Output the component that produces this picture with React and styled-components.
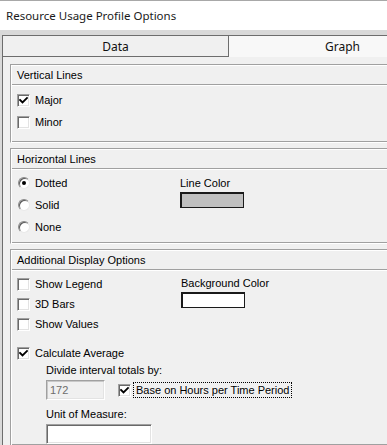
import React from 'react';
import styled, { createGlobalStyle } from 'styled-components';

const GlobalStyle = createGlobalStyle`
  html, body {
    margin: 0;
    padding: 0;
    overflow: hidden;
    background: #ffffff;
  }
`;

const Window = styled.div`
  width: 470px;
  height: 445px;
  border-top: 1px solid #a8a8a8;
  display: flex;
  flex-direction: column;
  font-family: 'Liberation Sans', Arial, sans-serif;
  font-size: 11px;
  color: #000;
`;

const TitleBar = styled.div`
  height: 30px;
  background: #ffffff;
  display: flex;
  align-items: center;
  padding-left: 6px;
  font-family: 'Noto Sans', 'Segoe UI', sans-serif;
  font-size: 11.5px;
  color: #1a1a1a;
`;

const Body = styled.div`
  flex: 1;
  background: #d9d9d9;
  padding: 5px 0 0 2px;
  display: flex;
  flex-direction: column;
`;

const TabBar = styled.div`
  display: flex;
  height: 22px;
`;

const Tab = styled.div`
  width: 227px;
  box-sizing: border-box;
  display: flex;
  align-items: center;
  justify-content: center;
  font-family: 'Noto Sans', 'Segoe UI', sans-serif;
  font-size: 12px;
  color: #111;
  border-top: 1px solid #6d6d6d;
  border-left: ${(p) => (p.$first ? '1px solid #6d6d6d' : 'none')};
  border-right: ${(p) => (p.$active ? 'none' : '1px solid #6d6d6d')};
  border-bottom: ${(p) => (p.$active ? 'none' : '1px solid #6d6d6d')};
  background: ${(p) => (p.$active ? '#f8f8f8' : '#f0f0f0')};
`;

const Panel = styled.div`
  flex: 1;
  background: #f0f0f0;
  border-left: 1px solid #6d6d6d;
  padding: 7px 0 0 7px;
  display: flex;
  flex-direction: column;
  gap: 5px;
`;

const Section = styled.div`
  box-sizing: border-box;
  height: ${(p) => (p.$height ? `${p.$height}px` : 'auto')};
  flex: ${(p) => (p.$height ? 'none' : '1')};
  border-top: 1px solid #a0a0a0;
  border-left: 1px solid #a0a0a0;
  border-right: 1px solid #ffffff;
  border-bottom: 1px solid #ffffff;
  box-shadow: inset 1px 1px 0 #ffffff, inset -1px -1px 0 #a0a0a0;
  padding: 1px;
  display: flex;
  flex-direction: column;
`;

const SectionHeader = styled.div`
  height: 18px;
  display: flex;
  align-items: center;
  padding-left: 5px;
  border-bottom: 1px solid #a0a0a0;
  box-shadow: 0 1px 0 #ffffff;
`;

const SectionBody = styled.div`
  padding: ${(p) => p.$pad || '4px 0 0 5px'};
  display: flex;
  flex-direction: ${(p) => (p.$row ? 'row' : 'column')};
`;

const Column = styled.div`
  display: flex;
  flex-direction: column;
  width: ${(p) => (p.$width ? `${p.$width}px` : 'auto')};
`;

const OptionRow = styled.div`
  height: ${(p) => p.$h || 22}px;
  display: flex;
  align-items: center;
  gap: ${(p) => p.$gap || 5}px;
  margin-top: ${(p) => p.$mt || 0}px;
`;

const BoxFrame = styled.span`
  width: 13px;
  height: 13px;
  box-sizing: border-box;
  flex: none;
  background: #ffffff;
  border-top: 1px solid #a0a0a0;
  border-left: 1px solid #a0a0a0;
  border-right: 1px solid #ffffff;
  border-bottom: 1px solid #ffffff;
  box-shadow: inset 1px 1px 0 #696969, inset -1px -1px 0 #e3e3e3;
  display: flex;
  align-items: center;
  justify-content: center;
`;

const RadioCircle = styled.span`
  width: 12px;
  height: 12px;
  box-sizing: border-box;
  flex: none;
  border-radius: 50%;
  background: #ffffff;
  border: 1px solid;
  border-color: #8a8a8a #e8e8e8 #e8e8e8 #8a8a8a;
  box-shadow: inset 1px 1px 0 #5a5a5a;
  display: flex;
  align-items: center;
  justify-content: center;
  margin-left: 1px;
  &::after {
    content: '';
    width: 4px;
    height: 4px;
    border-radius: 50%;
    background: ${(p) => (p.$on ? '#000' : 'transparent')};
  }
`;

const Label = styled.span`
  white-space: nowrap;
  padding: 1px 2px;
  border: 1px ${(p) => (p.$focus ? 'dotted #000' : 'solid transparent')};
  margin-left: -3px;
`;

const FieldLabel = styled.div`
  height: 14px;
  line-height: 14px;
  margin-top: ${(p) => p.$mt || 0}px;
  white-space: nowrap;
`;

const Swatch = styled.div`
  width: 64px;
  height: 16px;
  box-sizing: border-box;
  margin-top: ${(p) => p.$mt || 0}px;
  background: ${(p) => p.$color};
  border: 1px solid #1a1a1a;
  border-top-width: 2px;
  border-left-width: 2px;
`;

const TextInput = styled.div`
  width: ${(p) => p.$width}px;
  height: 20px;
  box-sizing: border-box;
  flex: none;
  background: ${(p) => (p.$disabled ? '#f0f0f0' : '#ffffff')};
  color: #6d6d6d;
  border-top: 1px solid #a0a0a0;
  border-left: 1px solid #a0a0a0;
  border-right: 1px solid #ffffff;
  border-bottom: 1px solid #ffffff;
  box-shadow: ${(p) =>
    p.$disabled
      ? 'inset 1px 1px 0 #c8c8c8, inset -1px -1px 0 #e3e3e3'
      : 'inset 1px 1px 0 #696969, inset -1px -1px 0 #e3e3e3'};
  display: flex;
  align-items: center;
  padding-left: 3px;
`;

const SubBlock = styled.div`
  padding-left: 29px;
  display: flex;
  flex-direction: column;
`;

const InputRow = styled.div`
  display: flex;
  align-items: center;
  margin-top: 3px;
  gap: 13px;
`;

const CheckMark = () => (
  <svg width="9" height="9" viewBox="0 0 9 9">
    <polyline points="1,4 3.5,6.5 8,2" fill="none" stroke="#000" strokeWidth="1.9" strokeLinecap="square" />
  </svg>
);

const Checkbox = ({ checked, label, focus, h, mt }) => (
  <OptionRow $h={h} $mt={mt}>
    <BoxFrame>{checked && <CheckMark />}</BoxFrame>
    <Label $focus={focus}>{label}</Label>
  </OptionRow>
);

const Radio = ({ checked, label }) => (
  <OptionRow>
    <RadioCircle $on={checked} />
    <Label>{label}</Label>
  </OptionRow>
);

export default function App() {
  return (
    <>
      <GlobalStyle />
      <Window>
        <TitleBar>Resource Usage Profile Options</TitleBar>
        <Body>
          <TabBar>
            <Tab $first>Data</Tab>
            <Tab $active>Graph</Tab>
          </TabBar>
          <Panel>
            <Section $height={79}>
              <SectionHeader>Vertical Lines</SectionHeader>
              <SectionBody>
                <Checkbox checked label="Major" />
                <Checkbox label="Minor" />
              </SectionBody>
            </Section>

            <Section $height={96}>
              <SectionHeader>Horizontal Lines</SectionHeader>
              <SectionBody $row $pad="3px 0 0 5px">
                <Column $width={163}>
                  <Radio checked label="Dotted" />
                  <Radio label="Solid" />
                  <Radio label="None" />
                </Column>
                <Column>
                  <FieldLabel $mt={4}>Line Color</FieldLabel>
                  <Swatch $color="#c0c0c0" $mt={2} />
                </Column>
              </SectionBody>
            </Section>

            <Section>
              <SectionHeader>Additional Display Options</SectionHeader>
              <SectionBody $pad="4px 0 0 5px">
                <OptionRow $h={60} style={{ alignItems: 'flex-start', gap: 0 }}>
                  <Column $width={164}>
                    <Checkbox h={20} label="Show Legend" />
                    <Checkbox h={20} label="3D Bars" />
                    <Checkbox h={20} label="Show Values" />
                  </Column>
                  <Column>
                    <FieldLabel $mt={2}>Background Color</FieldLabel>
                    <Swatch $color="#ffffff" $mt={2} />
                  </Column>
                </OptionRow>
                <Checkbox h={20} mt={9} checked label="Calculate Average" />
                <SubBlock>
                  <FieldLabel>Divide interval totals by:</FieldLabel>
                  <InputRow>
                    <TextInput $width={59} $disabled>172</TextInput>
                    <Checkbox h={20} checked focus label="Base on Hours per Time Period" />
                  </InputRow>
                  <FieldLabel $mt={7}>Unit of Measure:</FieldLabel>
                  <InputRow>
                    <TextInput $width={106} />
                  </InputRow>
                </SubBlock>
              </SectionBody>
            </Section>
          </Panel>
        </Body>
      </Window>
    </>
  );
}
